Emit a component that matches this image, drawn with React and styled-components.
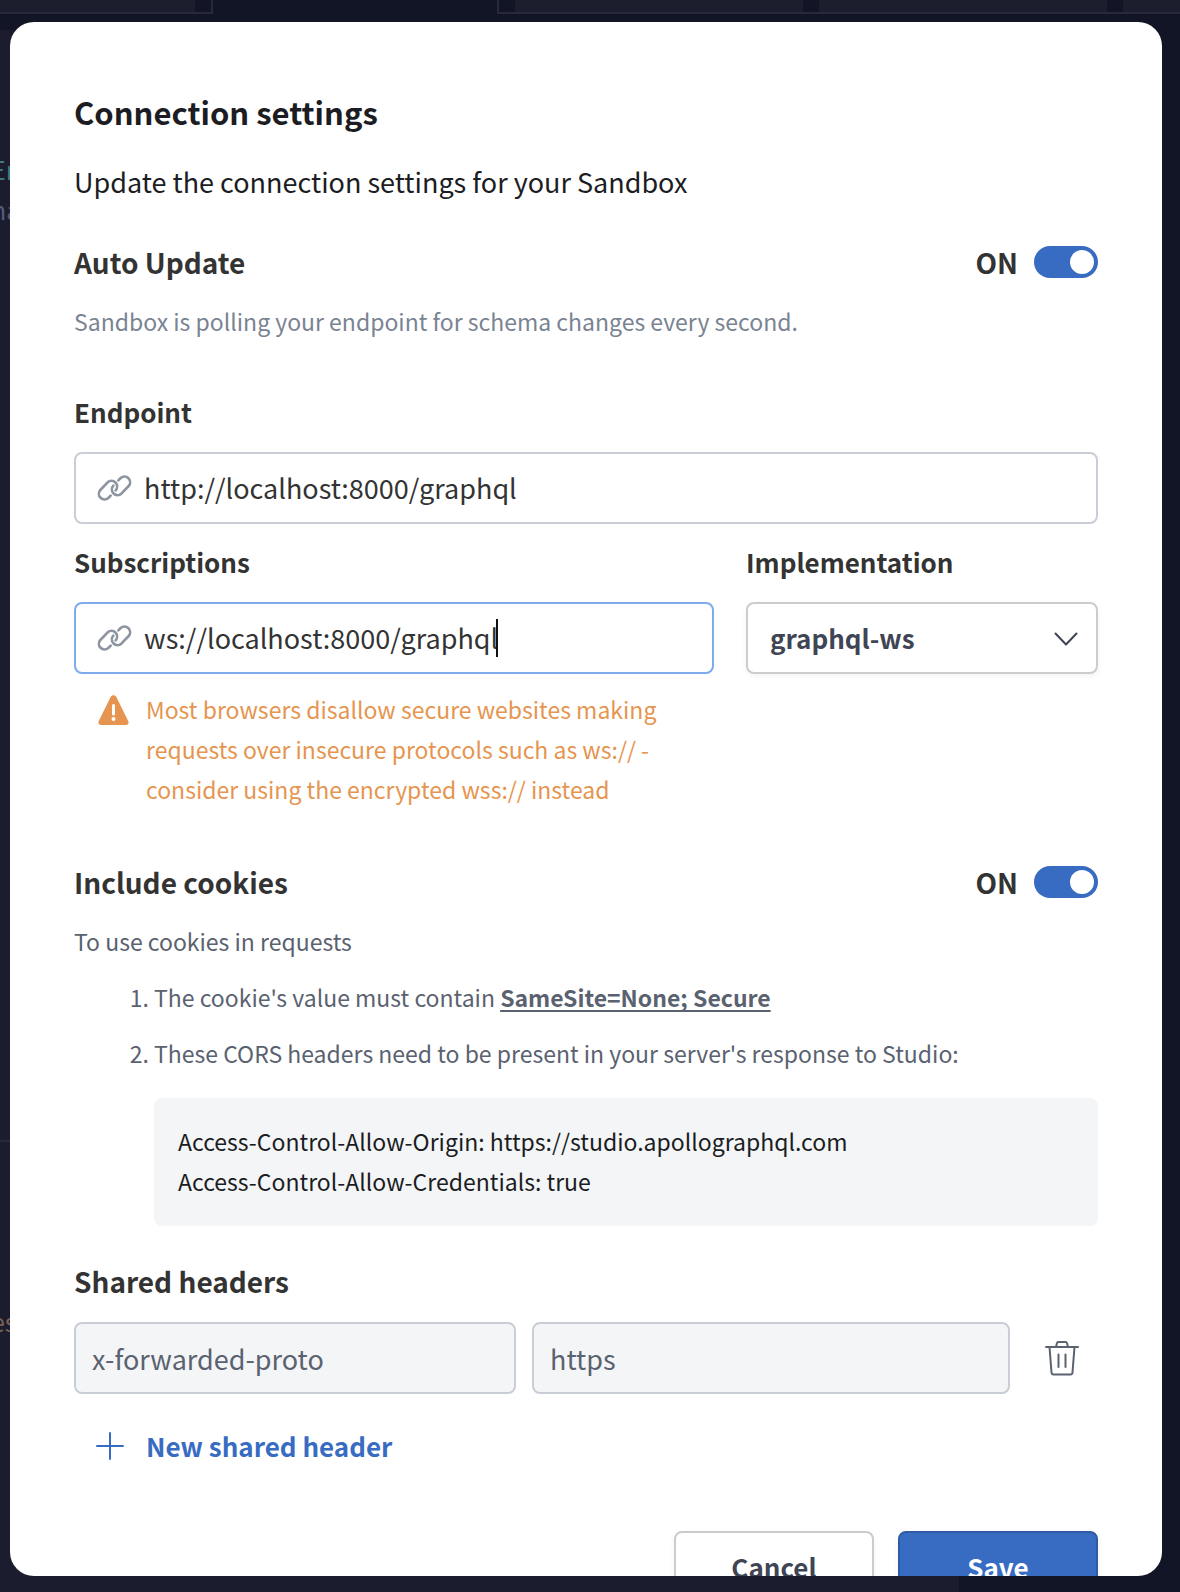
import React, { useState } from "react";
import styled, { createGlobalStyle } from "styled-components";

const color = {
  ink: "#1b1d23",
  heading: "#333333",
  muted: "#7a8392",
  body: "#5a6270",
  strong: "#3f4554",
  line: "#c8cdd6",
  neutralLine: "#cccccc",
  fill: "#f4f5f7",
  blue: "#386cc3",
  blueDark: "#2f5ba6",
  focus: "#7dabec",
  orange: "#e69550",
};

const sans = `"Noto Sans CJK SC", "Open Sans", sans-serif`;

const GlobalStyle = createGlobalStyle`
  *, *::before, *::after { box-sizing: border-box; }
  body {
    margin: 0;
    background: #121526;
    font-family: ${sans};
    font-size: 27px;
    line-height: 40px;
    color: ${color.ink};
  }
  h1, h2, p, ol { margin: 0; }
  button, input, select { font: inherit; }
`;

/* ---------- dimmed editor behind the dialog ---------- */

const Page = styled.div`
  display: grid;
  height: 100vh;
  overflow: hidden;
  > * {
    grid-area: 1 / 1;
    min-width: 0;
    min-height: 0;
  }
`;

const Editor = styled.div`
  display: flex;
  flex-direction: column;
`;

const TabStrip = styled.div`
  display: flex;
  height: 30px;
  align-items: flex-start;
`;

const TabGroup = styled.div`
  display: flex;
  gap: 16px;
  height: 14px;
  flex: ${(p) => (p.$grow ? "1" : "0 0 213px")};
  overflow: hidden;
  margin-left: ${(p) => (p.$grow ? "284px" : "0")};
  padding: ${(p) => (p.$grow ? "0 0 0 16px" : "0 16px 0 0")};
  border: 0 solid #27293a;
  border-width: ${(p) => (p.$grow ? "0 0 2px 2px" : "0 2px 2px 0")};
`;

const Tab = styled.div`
  flex: 1 0 ${(p) => p.$basis};
  background: #1c1e2e;
`;

const Panes = styled.div`
  flex: 1;
  display: grid;
  grid-template-columns: 959fr 221fr;
`;

const CodePane = styled.div`
  display: grid;
  grid-template-rows: 1110px 1fr;
  background: #1b1c2d;
  overflow: hidden;
`;

const CodeBlock = styled.div`
  padding-top: ${(p) => p.$top};
  border-top: ${(p) => (p.$divided ? "2px solid #27293a" : "0")};
  font-size: 25px;
`;

const CodeLine = styled.div`
  margin-left: -9px;
  color: ${(p) => p.$tint};
`;

/* ---------- dialog ---------- */

const Overlay = styled.div`
  padding: 22px 18px 16px 10px;
  display: flex;
`;

const Dialog = styled.form`
  flex: 1;
  min-width: 0;
  overflow: hidden;
  padding: 64px;
  border-radius: 24px;
  background: #fff;
`;

const Title = styled.h1`
  font-size: 31px;
  font-weight: 600;
  line-height: 52px;
`;

const Subtitle = styled.p`
  margin-top: 24px;
`;

const SettingRow = styled.div`
  display: flex;
  justify-content: space-between;
  align-items: center;
  height: 32px;
  margin-top: ${(p) => p.$top};
`;

const SectionHeading = styled.h2`
  font-size: 28px;
  font-weight: 600;
  color: ${color.heading};
`;

const SwitchLabel = styled.label`
  display: flex;
  align-items: center;
  gap: 16px;
  font-size: 28px;
  font-weight: 600;
  color: ${color.heading};
`;

const Switch = styled.input`
  appearance: none;
  display: flex;
  justify-content: ${(p) => (p.checked ? "flex-end" : "flex-start")};
  width: 64px;
  height: 32px;
  margin: 0;
  padding: 4px;
  border-radius: 16px;
  background: ${(p) => (p.checked ? color.blue : color.line)};
  cursor: pointer;
  &::before {
    content: "";
    width: 24px;
    height: 24px;
    border-radius: 50%;
    background: #fff;
  }
`;

const Note = styled.p`
  margin-top: 23px;
  font-size: 23px;
  color: ${(p) => (p.$muted ? color.muted : color.body)};
`;

const Field = styled.div`
  display: flex;
  flex-direction: column;
  gap: 20px;
  min-width: 0;
  margin-top: ${(p) => p.$top || "0"};
`;

const FieldLabel = styled.label`
  font-size: 26px;
  font-weight: 600;
  color: ${color.heading};
`;

const InputBox = styled.div`
  display: flex;
  align-items: center;
  height: 72px;
  padding: 0 20px;
  border: 2px solid ${(p) => (p.$focused ? color.focus : color.line)};
  border-radius: 8px;
  background: #fff;
  > svg {
    flex: none;
    margin-right: 12px;
  }
`;

const UrlInput = styled.input`
  field-sizing: content;
  min-width: 0;
  padding: 0;
  border: 0;
  outline: 0;
  background: none;
  color: ${color.heading};
`;

const Caret = styled.span`
  width: 2px;
  height: 38px;
  margin-left: -2px;
  background: #111;
`;

const Columns = styled.div`
  display: grid;
  grid-template-columns: 640fr 352fr;
  gap: 32px;
  margin-top: 18px;
`;

const Warning = styled.p`
  display: flex;
  gap: 17px;
  margin-top: 15px;
  padding-left: 24px;
  font-size: 23px;
  color: ${color.orange};
  > svg {
    flex: none;
    margin-top: 6px;
  }
`;

const SelectBox = styled.div`
  position: relative;
  > svg {
    position: absolute;
    right: 20px;
    top: 30px;
    pointer-events: none;
  }
`;

const Select = styled.select`
  appearance: none;
  width: 100%;
  height: 72px;
  padding: 0 56px 0 22px;
  border: 2px solid ${color.neutralLine};
  border-radius: 8px;
  background: #fff;
  box-shadow: 0 2px 6px rgba(0, 0, 0, 0.05);
  font-size: 26px;
  font-weight: 600;
  color: ${color.strong};
`;

const Steps = styled.ol`
  padding-left: 80px;
  font-size: 23px;
  color: ${color.body};
`;

const Step = styled.li`
  margin-top: 16px;
`;

const DocLink = styled.a`
  font-weight: 600;
  color: inherit;
  text-decoration: underline 2px;
  text-underline-offset: 3px;
  text-decoration-skip-ink: none;
`;

const Headers = styled.pre`
  margin: 25px 0 0;
  padding: 23px 24px 25px;
  border-radius: 8px;
  background: ${color.fill};
  font-family: ${sans};
  color: ${color.ink};
  white-space: pre-wrap;
`;

const HeaderSection = styled.section`
  display: flex;
  flex-direction: column;
  gap: 21px;
  margin-top: 35px;
`;

const HeaderRow = styled.div`
  display: grid;
  grid-template-columns: 442fr 478fr 72px;
  gap: 16px;
`;

const HeaderInput = styled.input`
  min-width: 0;
  width: 100%;
  height: 72px;
  padding: 0 16px;
  border: 2px solid ${color.line};
  border-radius: 8px;
  background: ${color.fill};
  color: ${color.body};
`;

const IconButton = styled.button`
  display: flex;
  align-items: center;
  justify-content: center;
  padding: 0;
  border: 0;
  background: none;
  color: ${color.body};
  cursor: pointer;
`;

const AddButton = styled.button`
  display: flex;
  align-items: center;
  gap: 22px;
  margin-top: 32px;
  padding: 0 0 0 22px;
  border: 0;
  background: none;
  font-size: 26px;
  font-weight: 600;
  color: ${color.blue};
  cursor: pointer;
`;

const Footer = styled.div`
  display: flex;
  justify-content: flex-end;
  gap: 24px;
  margin-top: 65px;
`;

const Button = styled.button`
  width: 200px;
  height: 72px;
  border: 2px solid ${(p) => (p.$primary ? color.blueDark : color.neutralLine)};
  border-radius: 8px;
  background: ${(p) => (p.$primary ? color.blue : "#fff")};
  color: ${(p) => (p.$primary ? "#fff" : color.strong)};
  box-shadow: 0 2px 6px rgba(0, 0, 0, 0.05);
  font-size: 26px;
  font-weight: 600;
  cursor: pointer;
`;

/* ---------- icons ---------- */

const LinkIcon = () => (
  <svg width="36" height="28" viewBox="-5 -3 108 84" fill="none" stroke="#8d95a1" strokeWidth="8" strokeLinecap="round" strokeLinejoin="round" aria-hidden="true">
    <path d="M39 62L32 69A17 17 0 0 1 8 45L30 22A17 17 0 0 1 54 46" />
    <path d="M62 16L69 9A17 17 0 0 1 93 33L71 56A17 17 0 0 1 47 32" />
  </svg>
);

const WarningIcon = () => (
  <svg width="31" height="30" viewBox="0 0 31 30" aria-hidden="true">
    <path d="M12.600 2C14 -.4 17 -.4 18.400 2L30.200 26C31.200 28 30 30 28.200 30H2.800C1 30 -.2 28 .8 26Z" fill="#e69550" />
    <path d="M15.500 10.500V19" stroke="#fff" strokeWidth="3" strokeLinecap="round" />
    <circle cx="15.500" cy="24" r="2" fill="#fff" />
  </svg>
);

const ChevronIcon = () => (
  <svg width="24" height="14" viewBox="0 0 24 14" fill="none" stroke="#3f4554" strokeWidth="2" strokeLinecap="round" strokeLinejoin="round" aria-hidden="true">
    <path d="M1.500 1.500L12 12.500L22.500 1.500" />
  </svg>
);

const TrashIcon = () => (
  <svg width="34" height="36" viewBox="0 0 34 36" fill="none" stroke="currentColor" strokeWidth="2" strokeLinecap="round" strokeLinejoin="round" aria-hidden="true">
    <path d="M1 7H33M11 7L12 3Q12.300 2 13.500 2H20.500Q21.700 2 22 3L23 7M4.500 7L6.500 32.500Q6.700 34.500 8.500 34.500H25.500Q27.300 34.500 27.500 32.500L29.500 7M13.500 14.500V27M20.500 14.500V27" />
  </svg>
);

const PlusIcon = () => (
  <svg width="28" height="28" viewBox="0 0 28 28" stroke="currentColor" strokeWidth="2" strokeLinecap="round" aria-hidden="true">
    <path d="M14 1V27M1 14H27" />
  </svg>
);

function SettingSwitch({ title, top }) {
  const [on, setOn] = useState(true);
  return (
    <SettingRow $top={top}>
      <SectionHeading>{title}</SectionHeading>
      <SwitchLabel>
        {on ? "ON" : "OFF"}
        <Switch type="checkbox" role="switch" aria-label={title} checked={on} onChange={() => setOn(!on)} />
      </SwitchLabel>
    </SettingRow>
  );
}

export default function App() {
  const [endpoint, setEndpoint] = useState("http://localhost:8000/graphql");
  const [socket, setSocket] = useState("ws://localhost:8000/graphql");

  return (
    <>
      <GlobalStyle />
      <Page>
        <Editor aria-hidden="true">
          <TabStrip>
            <TabGroup>
              <Tab $basis="0px" />
            </TabGroup>
            <TabGroup $grow>
              <Tab $basis="288px" />
              <Tab $basis="288px" />
              <Tab $basis="288px" />
            </TabGroup>
          </TabStrip>
          <Panes>
            <CodePane>
              <CodeBlock $top="119px">
                <CodeLine $tint="#3f7a7b">En</CodeLine>
                <CodeLine $tint="#575a7a">na</CodeLine>
              </CodeBlock>
              <CodeBlock $top="159px" $divided>
                <CodeLine $tint="#7a6456">es</CodeLine>
              </CodeBlock>
            </CodePane>
          </Panes>
        </Editor>

        <Overlay>
          <Dialog role="dialog" aria-labelledby="dialog-title" onSubmit={(e) => e.preventDefault()}>
            <Title id="dialog-title">Connection settings</Title>
            <Subtitle>Update the connection settings for your Sandbox</Subtitle>

            <SettingSwitch title="Auto Update" top="44px" />
            <Note $muted>Sandbox is polling your endpoint for schema changes every second.</Note>

            <Field $top="51px">
              <FieldLabel htmlFor="endpoint">Endpoint</FieldLabel>
              <InputBox>
                <LinkIcon />
                <UrlInput id="endpoint" value={endpoint} onChange={(e) => setEndpoint(e.target.value)} />
              </InputBox>
            </Field>

            <Columns>
              <div>
                <Field>
                  <FieldLabel htmlFor="subscriptions">Subscriptions</FieldLabel>
                  <InputBox $focused>
                    <LinkIcon />
                    <UrlInput id="subscriptions" value={socket} onChange={(e) => setSocket(e.target.value)} />
                    <Caret />
                  </InputBox>
                </Field>
                <Warning>
                  <WarningIcon />
                  <span>
                    Most browsers disallow secure websites making requests over insecure protocols such as ws:// -
                    consider using the encrypted wss:// instead
                  </span>
                </Warning>
              </div>
              <Field>
                <FieldLabel htmlFor="implementation">Implementation</FieldLabel>
                <SelectBox>
                  <Select id="implementation" defaultValue="graphql-ws">
                    <option>graphql-ws</option>
                  </Select>
                  <ChevronIcon />
                </SelectBox>
              </Field>
            </Columns>

            <SettingSwitch title="Include cookies" top="57px" />
            <Note>To use cookies in requests</Note>
            <Steps>
              <Step>
                The cookie's value must contain <DocLink href="#samesite">SameSite=None; Secure</DocLink>
              </Step>
              <Step>
                These CORS headers need to be present in your server's response to Studio:
                <Headers>{"Access-Control-Allow-Origin: https://studio.apollographql.com\nAccess-Control-Allow-Credentials: true"}</Headers>
              </Step>
            </Steps>

            <HeaderSection>
              <SectionHeading>Shared headers</SectionHeading>
              <HeaderRow>
                <HeaderInput aria-label="Header name" defaultValue="x-forwarded-proto" readOnly />
                <HeaderInput aria-label="Header value" defaultValue="https" readOnly />
                <IconButton type="button" aria-label="Delete header">
                  <TrashIcon />
                </IconButton>
              </HeaderRow>
            </HeaderSection>
            <AddButton type="button">
              <PlusIcon />
              New shared header
            </AddButton>

            <Footer>
              <Button type="button">Cancel</Button>
              <Button type="submit" $primary>
                Save
              </Button>
            </Footer>
          </Dialog>
        </Overlay>
      </Page>
    </>
  );
}
